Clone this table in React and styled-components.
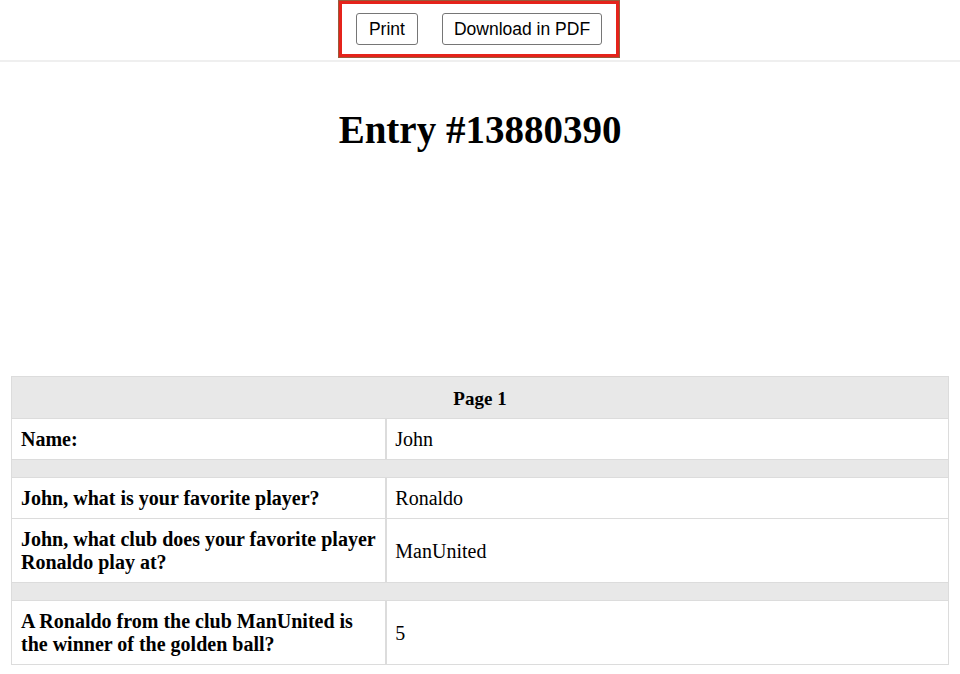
import React from "react"
import styled, { createGlobalStyle } from "styled-components"

const GlobalStyle = createGlobalStyle`
    html, body {
        margin: 0;
        padding: 0;
        background: #ffffff;
        font-family: "Liberation Serif", "Times New Roman", serif;
        color: #000;
    }
`

const TopBar = styled.div`
    height: 60px;
    border-bottom: 2px solid #efefef;
    display: flex;
    justify-content: center;
    align-items: flex-start;
`

const ButtonGroup = styled.div`
    margin-top: 1px;
    margin-left: -2px;
    width: 280px;
    height: 56px;
    box-sizing: border-box;
    border: 3px solid #e5231b;
    box-shadow: 0 0 0 1px #9a5a3a;
    display: flex;
    align-items: center;
    justify-content: center;
    gap: 24px;
`

const ToolButton = styled.button`
    height: 32px;
    padding: 0 ${props => props.pad || "11px"};
    font-family: "Liberation Sans", Arial, sans-serif;
    font-size: 17.5px;
    color: #000;
    background: #fff;
    border: 1px solid #767676;
    border-radius: 3px;
    cursor: pointer;
`

const Title = styled.h1`
    margin: 45px 0 223px;
    font-size: 39px;
    line-height: 46px;
    font-weight: bold;
    text-align: center;
`

const Wrapper = styled.div`
    padding: 0 11px 10px;
`

const EntryTable = styled.table`
    width: 100%;
    border-collapse: collapse;
    border: 1px solid #dcdcdc;
    font-size: 20px;
    line-height: 23px;
`

const HeadCell = styled.th`
    height: 40px;
    padding: 1px 0 0;
    background: #e8e8e8;
    border: 1px solid #dcdcdc;
    text-align: center;
    font-size: 19px;
    font-weight: bold;
`

const LabelCell = styled.td`
    width: 40%;
    padding: 9px 9px 8px;
    border: 1px solid #dcdcdc;
    font-weight: bold;
    text-align: left;
    vertical-align: middle;
`

const ValueCell = styled.td`
    padding: 9px 8px 8px;
    border: 1px solid #dcdcdc;
    border-left-width: 2px;
    vertical-align: middle;
`

const SpacerCell = styled.td`
    height: 17px;
    padding: 0;
    background: #e8e8e8;
    border: 1px solid #dcdcdc;
`

const rows = [
    { label: "Name:", value: "John" },
    null,
    { label: "John, what is your favorite player?", value: "Ronaldo" },
    { label: "John, what club does your favorite player Ronaldo play at?", value: "ManUnited" },
    null,
    { label: "A Ronaldo from the club ManUnited is the winner of the golden ball?", value: "5" },
]

export default function App() {
    return (
        <>
            <GlobalStyle />
            <TopBar>
                <ButtonGroup>
                    <ToolButton pad="12px">Print</ToolButton>
                    <ToolButton>Download in PDF</ToolButton>
                </ButtonGroup>
            </TopBar>
            <Title>Entry #13880390</Title>
            <Wrapper>
                <EntryTable>
                    <thead>
                        <tr>
                            <HeadCell colSpan={2}>Page 1</HeadCell>
                        </tr>
                    </thead>
                    <tbody>
                        {rows.map((row, i) =>
                            row ? (
                                <tr key={i}>
                                    <LabelCell>{row.label}</LabelCell>
                                    <ValueCell>{row.value}</ValueCell>
                                </tr>
                            ) : (
                                <tr key={i}>
                                    <SpacerCell colSpan={2} />
                                </tr>
                            )
                        )}
                    </tbody>
                </EntryTable>
            </Wrapper>
        </>
    )
}
